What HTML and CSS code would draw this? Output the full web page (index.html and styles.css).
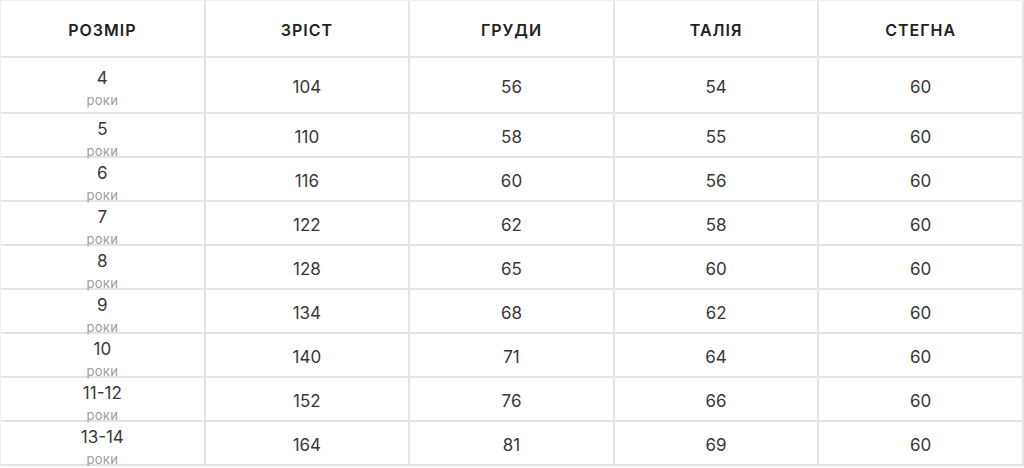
FILE: index.html
```html
<!DOCTYPE html>
<html lang="uk">
<head>
<meta charset="utf-8">
<title>Розмірна сітка</title>
<link rel="stylesheet" href="styles.css">
</head>
<body>
<div class="size-table">
  <div class="cell head">РОЗМІР</div>
  <div class="cell head">ЗРІСТ</div>
  <div class="cell head">ГРУДИ</div>
  <div class="cell head">ТАЛІЯ</div>
  <div class="cell head">СТЕГНА</div>

  <div class="cell size first"><span class="num">4</span><span class="unit">роки</span></div>
  <div class="cell first">104</div><div class="cell first">56</div><div class="cell first">54</div><div class="cell first">60</div>

  <div class="cell size"><span class="num">5</span><span class="unit">роки</span></div>
  <div class="cell">110</div><div class="cell">58</div><div class="cell">55</div><div class="cell">60</div>

  <div class="cell size"><span class="num">6</span><span class="unit">роки</span></div>
  <div class="cell">116</div><div class="cell">60</div><div class="cell">56</div><div class="cell">60</div>

  <div class="cell size"><span class="num">7</span><span class="unit">роки</span></div>
  <div class="cell">122</div><div class="cell">62</div><div class="cell">58</div><div class="cell">60</div>

  <div class="cell size"><span class="num">8</span><span class="unit">роки</span></div>
  <div class="cell">128</div><div class="cell">65</div><div class="cell">60</div><div class="cell">60</div>

  <div class="cell size"><span class="num">9</span><span class="unit">роки</span></div>
  <div class="cell">134</div><div class="cell">68</div><div class="cell">62</div><div class="cell">60</div>

  <div class="cell size"><span class="num">10</span><span class="unit">роки</span></div>
  <div class="cell">140</div><div class="cell">71</div><div class="cell">64</div><div class="cell">60</div>

  <div class="cell size"><span class="num">11-12</span><span class="unit">роки</span></div>
  <div class="cell">152</div><div class="cell">76</div><div class="cell">66</div><div class="cell">60</div>

  <div class="cell size"><span class="num">13-14</span><span class="unit">роки</span></div>
  <div class="cell">164</div><div class="cell">81</div><div class="cell">69</div><div class="cell">60</div>
</div>
</body>
</html>
```
FILE: styles.css
```css
html, body {
  margin: 0;
  padding: 0;
  background: #ffffff;
}

.size-table {
  width: 1024px;
  box-sizing: border-box;
  display: grid;
  grid-template-columns: repeat(5, 1fr);
  grid-template-rows: 57px 56px repeat(8, 44px);
  border-top: 1px solid #f0f0f0;
  border-left: 1px solid #f0f0f0;
  font-family: Inter, "Noto Sans", sans-serif;
  color: #383838;
}

.cell {
  box-sizing: border-box;
  border-right: 2px solid #e3e3e3;
  border-bottom: 2px solid #e3e3e3;
  display: flex;
  flex-direction: column;
  align-items: center;
  justify-content: center;
  padding-top: 4px;
  font-size: 17px;
  font-weight: 400;
  line-height: 20px;
}

.head {
  padding-top: 3px;
  font-size: 16px;
  font-weight: 600;
  color: #222222;
  letter-spacing: 1px;
}

.size {
  justify-content: flex-start;
  padding-top: 1px;
}

.size.first {
  padding-top: 6px;
}

.num {
  font-size: 17px;
  line-height: 28px;
}

.unit {
  font-size: 13px;
  line-height: 16px;
  letter-spacing: 0.3px;
  color: #9c9c9c;
}
```
